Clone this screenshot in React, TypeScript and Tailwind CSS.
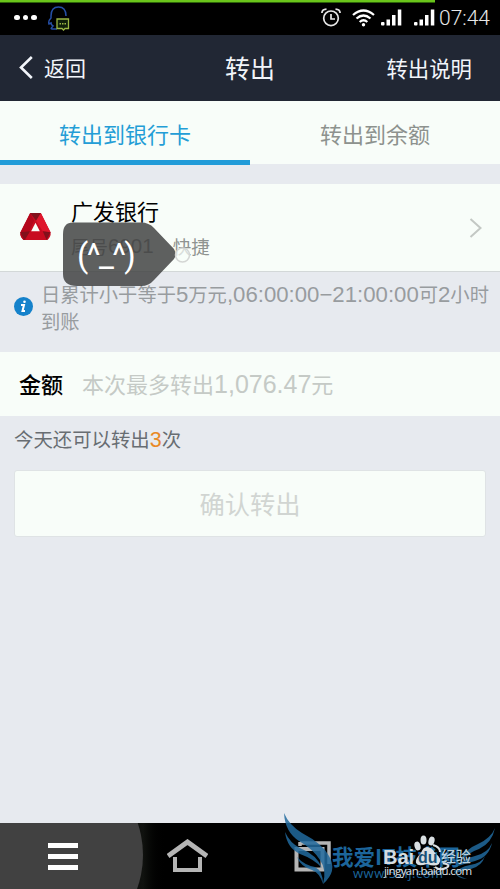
import type { ReactNode } from 'react'

const Num = ({ className, children }: { className: string; children: ReactNode }) => (
  <span className={`font-['Liberation_Sans','Noto_Sans_CJK_SC',sans-serif] ${className}`}>{children}</span>
)

function Signal() {
  return (
    <svg className="h-[17px] w-[21px]" viewBox="0 0 21 17" fill="#fff">
      <rect x="0" y="13" width="3.5" height="3.5" rx="1" />
      <rect x="5.5" y="10.5" width="3.5" height="6" />
      <rect x="11" y="6" width="3.5" height="10.5" />
      <rect x="16.8" y="0.5" width="3.5" height="16" />
    </svg>
  )
}

function StatusBar() {
  return (
    <div className="relative flex h-[35px] items-center bg-black">
      <div className="absolute top-0 left-0 h-[3px] w-[435px] border-b border-[#2d6508] bg-[#6ac51b]" />
      <div className="ml-[14px] flex gap-[3px]">
        <i className="size-[5.5px] rounded-full bg-white" />
        <i className="size-[5.5px] rounded-full bg-white" />
        <i className="size-[5.5px] rounded-full bg-white" />
      </div>
      <svg className="ml-[11px] h-[26px] w-[23px]" viewBox="0 0 23 26" fill="none">
        <path d="M18 11C18 5 15 2 10.500 2S3 5 3 11L3 13Q0 16 1 19L3 18Q3 20 5 21Q2 24 4 24H9" stroke="#254fa7" strokeWidth="1.500" />
        <path d="M9 14H20.500V23.500H17L15.500 25L14 23.500H9Z" fill="#10200a" stroke="#9bb844" strokeWidth="1.300" />
        <path d="M11.500 18.700H18.500" stroke="#9bb844" strokeWidth="1.600" strokeDasharray="1.500 1" />
      </svg>
      <div className="ml-auto flex items-center pr-[9px]">
        <svg className="h-[19px] w-[20px]" viewBox="0 0 20 19" fill="none" stroke="#e7e7e7" strokeWidth="1.700">
          <circle cx="10" cy="10.300" r="7.300" />
          <path d="M10 6V11H14M0.900 5Q1 1.500 5.500 1.200M19.100 5Q19 1.500 14.500 1.200" />
        </svg>
        <svg className="ml-[11px] h-[18px] w-[23px]" viewBox="0 0 23 18" fill="none" stroke="#fff" strokeWidth="2.300">
          <path d="M1 6Q11.500 -3 22 6M4.500 9.500Q11.500 3.500 18.500 9.500M7.700 13Q11.500 9.500 15.300 13" />
          <circle cx="11.500" cy="15.700" r="1.700" fill="#fff" stroke="none" />
        </svg>
        <div className="ml-[6px] flex gap-[12px]">
          <Signal />
          <Signal />
        </div>
        <span className="ml-[4px] w-[52px] font-['Roboto',sans-serif] text-[21px] leading-[38px] font-light text-[#e8e8e8]">07:44</span>
      </div>
    </div>
  )
}

function Header() {
  return (
    <header className="grid h-[66px] grid-cols-3 items-center bg-[#212734] text-[#f2f5fa]">
      <div className="flex items-center pl-[19px]">
        <svg className="h-[24px] w-[14px]" viewBox="0 0 14 24" fill="none" stroke="currentColor" strokeWidth="2.600">
          <path d="M12.800 1L2 11.500L12.800 22" />
        </svg>
        <span className="ml-[11px] text-[21px]">返回</span>
      </div>
      <h1 className="text-center text-[25px]">转出</h1>
      <a className="pr-[28px] text-right text-[21.4px]">转出说明</a>
    </header>
  )
}

function BankRow() {
  return (
    <section className="relative flex h-[88px] items-center border-b border-[#d3d8d8] bg-[#f8fdf9]">
      <svg className="mt-[-2px] ml-[19px] h-[29px] w-[33px]" viewBox="0 0 33 30">
        <path d="M11 1H22L32 21Q33 25 29 29H4Q0 25 1 21Z" fill="#c80b20" />
        <path d="M11 1H22L32 21L24 20L17 9Z" fill="#df162c" />
        <path d="M11 1L15 9L6 29H4Q0 25 1 21Z" fill="#b3061b" />
        <path d="M11 1H22L17 9ZM1 21L11 20L5 29ZM32 21L24 20L28 29Z" fill="#82101b" />
        <path d="M16.500 11L21 20H12Z" fill="#f8fdf9" />
      </svg>
      <div className="ml-[19px]">
        <div className="text-[22px] leading-[36px] text-black">广发银行</div>
        <div className="flex items-center text-[18.5px] leading-[36px] text-[#8f9390]">
          尾号<Num className="text-[20.5px]">6901</Num>
          <span className="ml-[19px]">快捷</span>
        </div>
      </div>
      <svg className="mr-[18px] ml-auto h-[20px] w-[13px]" viewBox="0 0 13 20" fill="none" stroke="#c3c8c4" strokeWidth="2">
        <path d="M1.500 1L11.500 10L1.500 19" />
      </svg>
      {/* floating assistant bubble */}
      <div className="absolute top-[38px] left-[63px] z-10">
        <svg className="h-[65px] w-[130px]" viewBox="0 0 130 65">
          <path d="M10 0.500H78Q86 0.500 91 6L111 27Q114 32 111 37L91 58Q86 64 78 64H14Q0 64 0 52V12Q0 0.500 10 0.500Z" fill="#3c3d3d" fillOpacity="0.820" />
          <circle cx="119.500" cy="33" r="7" fill="#f8fdf9" fillOpacity="0.700" stroke="#d4d6d4" strokeWidth="1.500" />
        </svg>
        <span className="absolute top-[14px] left-[14px] font-['Roboto',sans-serif] text-[33px] leading-[40px] tracking-[-1.6px] whitespace-nowrap text-white">(^_^)</span>
      </div>
    </section>
  )
}

function Watermarks() {
  return (
    <div className="pointer-events-none absolute right-0 bottom-0 h-[79px] w-[220px] overflow-hidden">
      <svg className="absolute inset-0" width="220" height="79" viewBox="0 0 220 79" fill="#216a9d" fillOpacity="0.850">
        <path d="M4 3Q9 15 22 23Q43 34 49 46Q58 61 43 74Q47 60 40 50Q33 39 19 31Q5 22 4 3Z" />
        <path d="M5 22Q10 33 20 38Q37 45 42 58Q34 49 20 44Q7 38 5 22ZM17 47Q24 55 35 57Q43 61 43 74Q40 63 32 60Q21 57 17 47Z" />
        <path d="M215 18Q211 28 198 34Q183 40 180 52Q187 43 199 39Q212 33 215 18ZM212 33Q208 43 195 46Q183 49 175 57Q184 54 195 51Q209 47 212 33ZM205 46Q202 53 190 55Q179 57 174 64Q182 60 191 59Q202 56 205 46ZM180 57Q168 63 187 69Q176 68 174 61Z" />
      </svg>
      <span className="absolute top-[32px] left-[52px] text-[21.5px] leading-[28px] font-bold whitespace-nowrap text-[#1c659b]">我爱IT技术网</span>
      <span className="absolute top-[54px] left-[73px] font-['Open_Sans',sans-serif] text-[13px] leading-[18px] tracking-[0.5px] text-[#1c659b]">www.52ij.com</span>
      <svg className="absolute top-[24px] left-[133px]" width="44" height="38" viewBox="0 0 44 38" fill="#d9dfe2">
        <ellipse cx="4.500" cy="12" rx="3" ry="4.500" transform="rotate(-15 4.500 12)" />
        <ellipse cx="10.500" cy="6" rx="3" ry="4.500" />
        <ellipse cx="18.500" cy="7" rx="3" ry="4.500" transform="rotate(15 18.500 7)" />
        <path d="M14 13Q19 13 22 19Q30 25 26 30Q22 33 14 30Q5 33 3 29Q2 25 8 19Q10 13 14 13Z" />
        <path d="M20 11Q27 13 27 18M30 29Q39 31 33 34Q27 37 22 33" fill="none" stroke="#d9dfe2" strokeWidth="2" />
      </svg>
      <span className="absolute top-[34px] left-[103px] font-['Liberation_Sans',sans-serif] text-[20px] leading-[26px] font-bold text-[#d5dce1]">Bai</span>
      <span className="absolute top-[37px] left-[138px] font-['Liberation_Sans',sans-serif] text-[16px] leading-[22px] font-bold text-[#185278]">du</span>
      <span className="absolute top-[35px] left-[161px] text-[15px] leading-[22px] font-medium text-[#b8d0df]">经验</span>
      <span className="absolute top-[52px] left-[104px] font-['Open_Sans',sans-serif] text-[11.5px] leading-[18px] tracking-[-0.6px] text-[#e2e5e8]">jingyan.baidu.com</span>
    </div>
  )
}

export default function App() {
  return (
    <div className="relative flex h-[889px] w-[500px] flex-col overflow-hidden bg-[#e7eaef] font-['Noto_Sans_CJK_SC',sans-serif]">
      <StatusBar />
      <Header />
      <nav className="grid h-[63px] grid-cols-2 bg-[#f8fdf9] text-center text-[22px] leading-[64px]">
        <div className="h-[64px] border-b-[5px] border-[#219bd8] text-[#249dd6]">转出到银行卡</div>
        <div className="text-[#8d928e]">转出到余额</div>
      </nav>
      <main className="flex flex-1 flex-col pt-[20px]">
        <BankRow />
        <div className="flex h-[80px] items-center pl-[14px]">
          <svg className="mt-[-11px] size-[19px] shrink-0" viewBox="0 0 19 19">
            <circle cx="9.500" cy="9.500" r="9.500" fill="#1582cb" />
            <path d="M7 8H10L8.500 14H11" fill="none" stroke="#fff" strokeWidth="2" />
            <circle cx="10.500" cy="4.700" r="1.300" fill="#fff" />
          </svg>
          <p className="mt-[-9px] ml-[8px] text-[19.3px] leading-[26px] whitespace-nowrap text-[#989c9f]">
            日累计小于等于<Num className="text-[22.2px]">5</Num>万元<Num className="text-[22.2px]">,06:00:00−21:00:00</Num>可<Num className="text-[22.2px]">2</Num>小时
            <br />
            到账
          </p>
        </div>
        <div className="flex h-[64px] items-center bg-[#f8fdf9] pl-[19px]">
          <label className="mt-[-1px] text-[22px] font-medium text-black">金额</label>
          <span className="mt-[1px] ml-[19px] text-[22px] text-[#c5cac6]">
            本次最多转出<Num className="text-[25px]">1,076.47</Num>元
          </span>
        </div>
        <p className="mt-[9px] ml-[14px] h-[28px] text-[19.4px] leading-[28px] text-[#686d72]">
          今天还可以转出<Num className="text-[21.5px] text-[#e98925]">3</Num>次
        </p>
        <button className="mx-[14px] mt-[17px] h-[67px] rounded-[3px] border border-[#dfe3e5] bg-[#f8fdf9] text-[25.3px] text-[#d1d5d2]">确认转出</button>
      </main>
      <footer className="relative flex h-[66px] items-center overflow-hidden bg-gradient-to-r from-black from-[0px] via-[#10120f] via-[143px] to-black to-[168px]">
        <div className="absolute top-[-68px] -left-[57px] size-[200px] rounded-full bg-[#414141]" />
        <div className="relative ml-[48px] flex w-[30px] flex-col gap-[6px]">
          <i className="h-[5px] bg-white" />
          <i className="h-[5px] bg-white" />
          <i className="h-[5px] bg-white" />
        </div>
        <svg className="ml-[89px] h-[34px] w-[41px]" viewBox="0 0 41 34" fill="none" stroke="#b5b5b5">
          <path d="M1 17L20.500 3L40 17" strokeWidth="5" />
          <path d="M8 18V31H33V18" strokeWidth="4" />
        </svg>
        <svg className="ml-[86px] h-[31px] w-[38px]" viewBox="0 0 38 31" fill="none" stroke="#b5b5b5" strokeWidth="4">
          <path d="M6 2H35V23M6 1V5" strokeWidth="3.500" />
          <rect x="2.500" y="8" width="26" height="20.500" />
        </svg>
      </footer>
      <Watermarks />
    </div>
  )
}
